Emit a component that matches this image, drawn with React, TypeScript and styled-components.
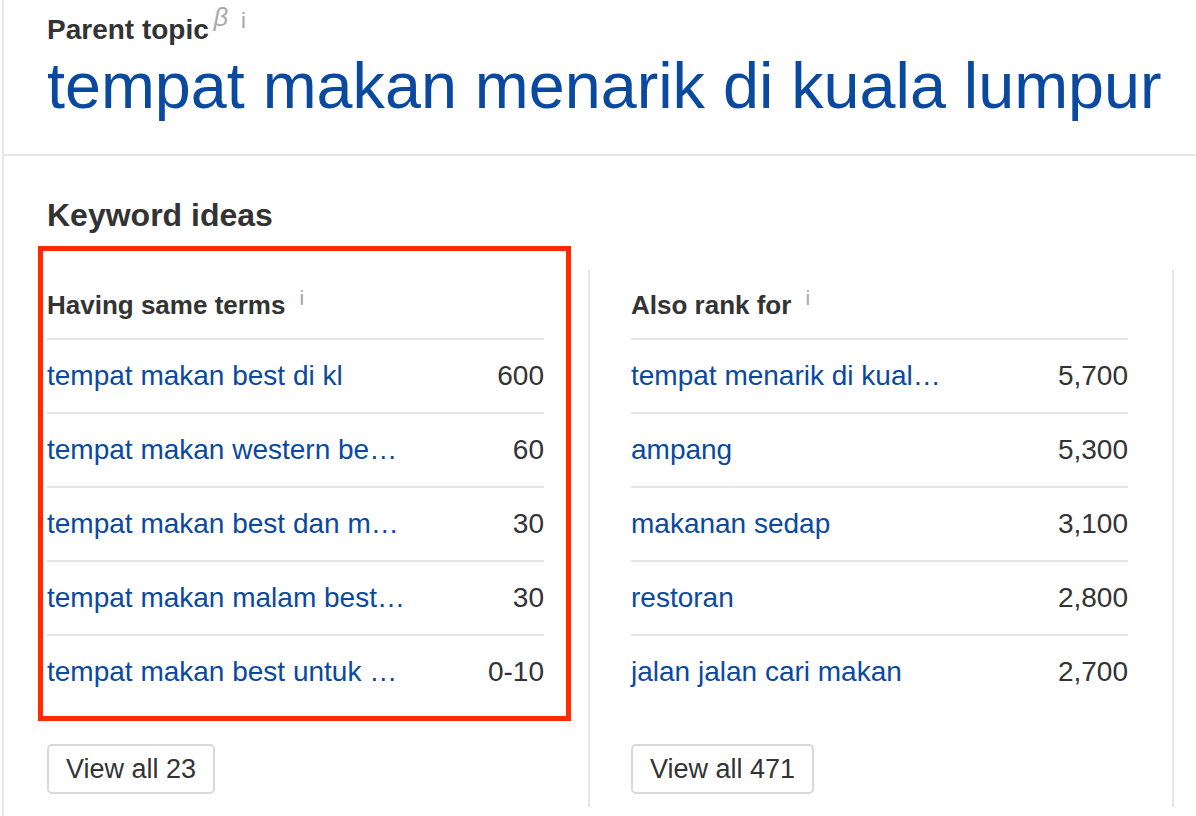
import React from "react";
import styled, { createGlobalStyle } from "styled-components";

const GlobalStyle = createGlobalStyle`
  html, body {
    margin: 0;
    padding: 0;
    background: #ffffff;
  }
  body {
    font-family: "Liberation Sans", Arial, Helvetica, sans-serif;
    color: #333333;
  }
`;

const LINK = "#0a49a0";
const LINE = "#e6e6e6";

const Page = styled.div`
  margin-left: 2px;
  border-left: 2px solid ${LINE};
  min-height: 816px;
  box-sizing: border-box;
`;

const TopicHeader = styled.header`
  padding: 13px 0 30px 43px;
  border-bottom: 2px solid ${LINE};
`;

const ParentLabel = styled.div`
  font-size: 28px;
  font-weight: 700;
  line-height: 34px;
  color: #333333;
  white-space: nowrap;
`;

const Beta = styled.span`
  font-size: 25px;
  font-weight: 400;
  font-style: italic;
  color: #a8a8a8;
  line-height: 0;
  vertical-align: 13px;
  margin-left: 5px;
`;

const Info = styled.span<{ $raise: number; $gap: number; $size: number }>`
  font-size: ${(p) => p.$size}px;
  font-weight: 400;
  color: #a6a6a6;
  line-height: 0;
  vertical-align: ${(p) => p.$raise}px;
  margin-left: ${(p) => p.$gap}px;
`;

const TopicTitle = styled.a`
  display: block;
  margin-top: 1px;
  font-size: 64.7px;
  line-height: 76px;
  color: ${LINK};
  text-decoration: none;
  white-space: nowrap;
`;

const IdeasSection = styled.section`
  padding: 40px 0 0 43px;
`;

const SectionTitle = styled.h2`
  margin: 0 0 36px;
  font-size: 32px;
  line-height: 38px;
  font-weight: 700;
  color: #333333;
`;

const Columns = styled.div`
  display: flex;
  align-items: stretch;
`;

const Column = styled.div<{ $padLeft: number }>`
  width: 497px;
  padding: 0 44px 13px ${(p) => p.$padLeft}px;
  border-right: 2px solid ${LINE};
  display: flex;
  flex-direction: column;
`;

const ListBlock = styled.div`
  position: relative;
`;

const Highlight = styled.div`
  position: absolute;
  top: -24px;
  left: -9px;
  right: -27px;
  bottom: -13px;
  border: 5px solid #ff2b00;
  pointer-events: none;
`;

const ColumnHeader = styled.div`
  padding: 20px 0 18px;
  font-size: 26px;
  line-height: 30px;
  font-weight: 700;
  color: #333333;
  border-bottom: 2px solid ${LINE};
`;

const Row = styled.div<{ $last?: boolean }>`
  display: flex;
  align-items: center;
  justify-content: space-between;
  gap: 12px;
  height: 72px;
  border-bottom: ${(p) => (p.$last ? "none" : `2px solid ${LINE}`)};
  font-size: 28px;
  line-height: 72px;
`;

const KeywordLink = styled.a`
  display: block;
  min-width: 0;
  white-space: nowrap;
  color: ${LINK};
  text-decoration: none;
`;

const Volume = styled.span`
  color: #333333;
  white-space: nowrap;
`;

const ViewAllButton = styled.button`
  align-self: flex-start;
  margin-top: 36px;
  height: 50px;
  padding: 0 17px;
  border: 2px solid #d9d9d9;
  border-radius: 5px;
  background: #ffffff;
  color: #333333;
  font-family: "Liberation Sans", Arial, Helvetica, sans-serif;
  font-size: 27px;
  line-height: 46px;
  cursor: pointer;
`;

type Item = { keyword: string; volume: string };

type ListProps = {
  title: string;
  items: Item[];
  total: number;
  padLeft: number;
  highlighted?: boolean;
};

const KeywordList: React.FC<ListProps> = ({
  title,
  items,
  total,
  padLeft,
  highlighted,
}) => (
  <Column $padLeft={padLeft}>
    <ListBlock>
      <ColumnHeader>
        {title}
        <Info $raise={9} $gap={14} $size={21}>
          i
        </Info>
      </ColumnHeader>
      {items.map((it, i) => (
        <Row key={it.keyword} $last={i === items.length - 1}>
          <KeywordLink href="#">{it.keyword}</KeywordLink>
          <Volume>{it.volume}</Volume>
        </Row>
      ))}
      {highlighted && <Highlight />}
    </ListBlock>
    <ViewAllButton>View all {total}</ViewAllButton>
  </Column>
);

const sameTerms: Item[] = [
  { keyword: "tempat makan best di kl", volume: "600" },
  { keyword: "tempat makan western be…", volume: "60" },
  { keyword: "tempat makan best dan m…", volume: "30" },
  { keyword: "tempat makan malam best…", volume: "30" },
  { keyword: "tempat makan best untuk …", volume: "0-10" },
];

const alsoRank: Item[] = [
  { keyword: "tempat menarik di kual…", volume: "5,700" },
  { keyword: "ampang", volume: "5,300" },
  { keyword: "makanan sedap", volume: "3,100" },
  { keyword: "restoran", volume: "2,800" },
  { keyword: "jalan jalan cari makan", volume: "2,700" },
];

export default function App() {
  return (
    <>
      <GlobalStyle />
      <Page>
        <TopicHeader>
          <ParentLabel>
            Parent topic
            <Beta>β</Beta>
            <Info $raise={11} $gap={13} $size={22}>
              i
            </Info>
          </ParentLabel>
          <TopicTitle href="#">tempat makan menarik di kuala lumpur</TopicTitle>
        </TopicHeader>
        <IdeasSection>
          <SectionTitle>Keyword ideas</SectionTitle>
          <Columns>
            <KeywordList
              title="Having same terms"
              items={sameTerms}
              total={23}
              padLeft={0}
              highlighted
            />
            <KeywordList
              title="Also rank for"
              items={alsoRank}
              total={471}
              padLeft={41}
            />
          </Columns>
        </IdeasSection>
      </Page>
    </>
  );
}
